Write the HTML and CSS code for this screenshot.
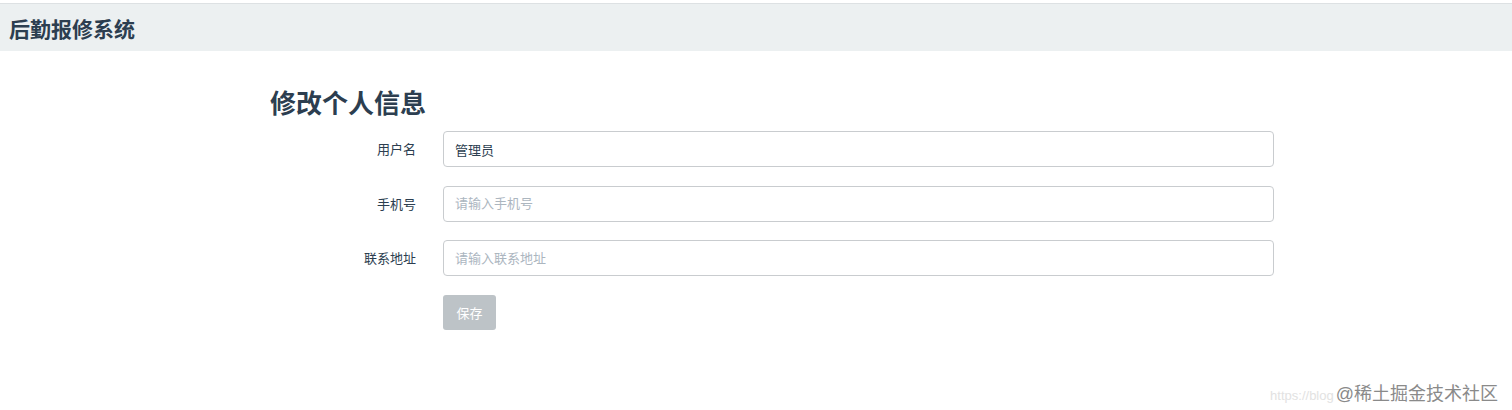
FILE: index.html
```html
<!DOCTYPE html>
<html>
<head lang="zh">
    <meta charset="UTF-8">
    <title>后勤报修系统</title>
    <link rel="stylesheet" href="styles.css">
</head>
<body>
<div id="header">
    <span class="brand">后勤报修系统</span>
</div>
<div id="main">
    <h2 class="title">修改个人信息</h2>
    <form class="info-form">
        <label class="label">用户名</label>
        <input class="input" type="text" value="管理员">
        <label class="label">手机号</label>
        <input class="input" type="text" placeholder="请输入手机号">
        <label class="label">联系地址</label>
        <input class="input" type="text" placeholder="请输入联系地址">
        <span></span>
        <div><button class="btn" type="button">保存</button></div>
    </form>
</div>
<div class="watermark">
    <span class="url">https://blog</span>
    <span class="mark">@稀土掘金技术社区</span>
</div>
</body>
</html>
```

FILE: styles.css
```css
*{
    margin: 0;
    padding: 0;
    box-sizing: border-box;
}
body{
    font-family: "Liberation Sans", "Noto Sans CJK SC", sans-serif;
    color: #2c3e50;
    background: #ffffff;
    height: 410px;
    overflow: hidden;
    position: relative;
    padding-top: 3px;
}
#header{
    height: 48px;
    background: #ecf0f1;
    border-top: 1px solid #dde1e3;
    display: flex;
    align-items: center;
    padding-left: 9px;
}
#header .brand{
    font-size: 21px;
    font-weight: bold;
    color: #2c3e50;
}
#main{
    padding-left: 270px;
    padding-top: 36px;
}
.title{
    font-size: 26px;
    font-weight: bold;
    line-height: 34px;
    margin-bottom: 10px;
}
.info-form{
    display: grid;
    grid-template-columns: 173px 831px;
    row-gap: 18.67px;
}
.label{
    font-size: 13px;
    text-align: right;
    padding-right: 27px;
    padding-top: 8px;
    color: #2c3e50;
}
.input{
    height: 36px;
    border: 1px solid #c9cccf;
    border-radius: 4px;
    padding: 0 11px;
    font-family: inherit;
    font-size: 13px;
    color: #2c3e50;
    outline: none;
}
.input::placeholder{
    color: #acb6bf;
}
.btn{
    width: 53px;
    height: 35px;
    border: none;
    border-radius: 3px;
    background: #bdc3c7;
    color: #ffffff;
    font-family: inherit;
    font-size: 13px;
}
.watermark{
    position: absolute;
    right: 14px;
    bottom: 5px;
    display: flex;
    align-items: baseline;
}
.watermark .url{
    font-size: 13px;
    color: #e2e2e2;
    margin-right: 2px;
}
.watermark .mark{
    font-size: 18px;
    color: #8a8a8a;
}
```
